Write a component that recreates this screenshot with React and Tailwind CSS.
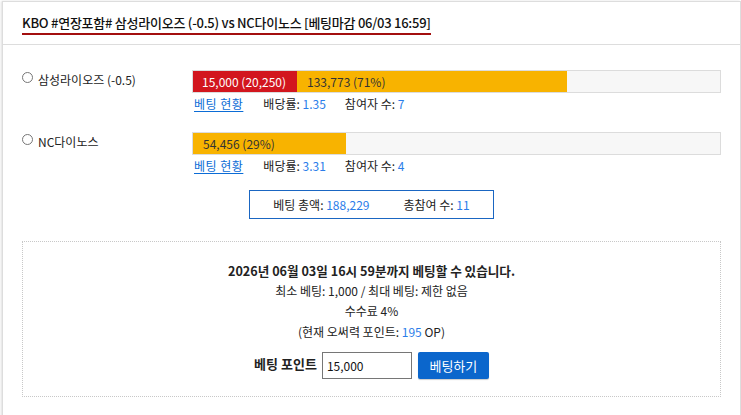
import React from "react";

const font = { fontFamily: '"Noto Sans CJK KR", "Noto Sans", "Liberation Sans", sans-serif' };

function Radio() {
  return <span className="inline-block w-[11px] h-[11px] rounded-full border border-[#767676] bg-white mr-[5px] translate-y-[1px]" />;
}

function OptionRow({ name, red, orange, redText, orangeText, odds, count }) {
  return (
    <div className="flex">
      <div className="w-[170px] flex items-start pt-[1px] text-[12px] text-[#222]">
        <Radio />
        <span>{name}</span>
      </div>
      <div className="flex-1">
        <div className="h-[23px] border border-[#dcdcdc] bg-[#f7f7f7] flex text-[12px] leading-[21px]">
          {red > 0 && (
            <div className="bg-[#d2161e] text-white pl-[9px] whitespace-nowrap" style={{ width: red }}>
              {redText}
            </div>
          )}
          <div className="bg-[#f8b300] text-[#333] pl-[10px] whitespace-nowrap" style={{ width: orange }}>
            {orangeText}
          </div>
        </div>
        <div className="flex text-[12px] mt-[2px] pl-[2px] text-[#222]">
          <a className="text-[#0b6cd6] underline underline-offset-2 tracking-[0.5px] mr-[20px]">베팅 현황</a>
          <span className="mr-[19px]">배당률: <span className="text-[#2b7de9]">{odds}</span></span>
          <span>참여자 수: <span className="text-[#2b7de9]">{count}</span></span>
        </div>
      </div>
    </div>
  );
}

export default function App() {
  return (
    <div className="w-[741px] h-[415px] overflow-hidden bg-white" style={font}>
      <div className="ml-[2px] mt-[1px] w-[739px] h-[500px] border border-[#dddddd] shadow-[-1px_0_2px_rgba(0,0,0,0.12)]">
        <div className="h-[43px] border-b border-[#dddddd] px-[19px] flex items-start pt-[12px]">
          <span className="text-[13px] leading-[17px] text-[#111] font-medium tracking-[-0.25px] border-b-2 border-[#a30f0f] pb-[2px]">
            KBO #연장포함# 삼성라이오즈 (-0.5) vs NC다이노스 [베팅마감 06/03 16:59]
          </span>
        </div>
        <div className="px-[19px] pt-[25px]">
          <OptionRow name="삼성라이오즈 (-0.5)" red={104} orange={270} redText="15,000 (20,250)" orangeText="133,773 (71%)" odds="1.35" count="7" />
          <div className="h-[19px]" />
          <OptionRow name="NC다이노스" red={0} orange={153} orangeText="54,456 (29%)" odds="3.31" count="4" />
          <div className="flex justify-center mt-[15px]">
            <div className="w-[245px] h-[29px] border border-[#1a66c2] flex items-center justify-center gap-[34px] text-[12px] text-[#222]">
              <span>베팅 총액: <span className="text-[#2b7de9]">188,229</span></span>
              <span>총참여 수: <span className="text-[#2b7de9]">11</span></span>
            </div>
          </div>
          <div className="mt-[22px] border border-dotted border-[#c8c8c8] h-[156px] flex flex-col items-center pt-[19px] text-[12px] text-[#222]">
            <div className="font-bold text-[12.6px] leading-[20px]">2026년 06월 03일 16시 59분까지 베팅할 수 있습니다.</div>
            <div className="leading-[20px]">최소 베팅: 1,000 / 최대 베팅: 제한 없음</div>
            <div className="leading-[20px]">수수료 4%</div>
            <div className="leading-[21px]">(현재 오써력 포인트: <span className="text-[#2b7de9]">195</span> OP)</div>
            <div className="flex items-center mt-[10px]">
              <span className="font-bold text-[13px] mr-[5px] -translate-y-[2px]">베팅 포인트</span>
              <input
                readOnly
                value="15,000"
                className="w-[90px] h-[27px] border border-[#767676] px-[4px] text-[12px] text-[#111] outline-none"
                style={font}
              />
              <button className="ml-[6px] w-[71px] h-[27px] bg-[#0b66cc] rounded-[2px] text-white text-[13px] shadow-[0_1px_1px_rgba(0,0,0,0.2)]">
                베팅하기
              </button>
            </div>
          </div>
        </div>
      </div>
    </div>
  );
}
